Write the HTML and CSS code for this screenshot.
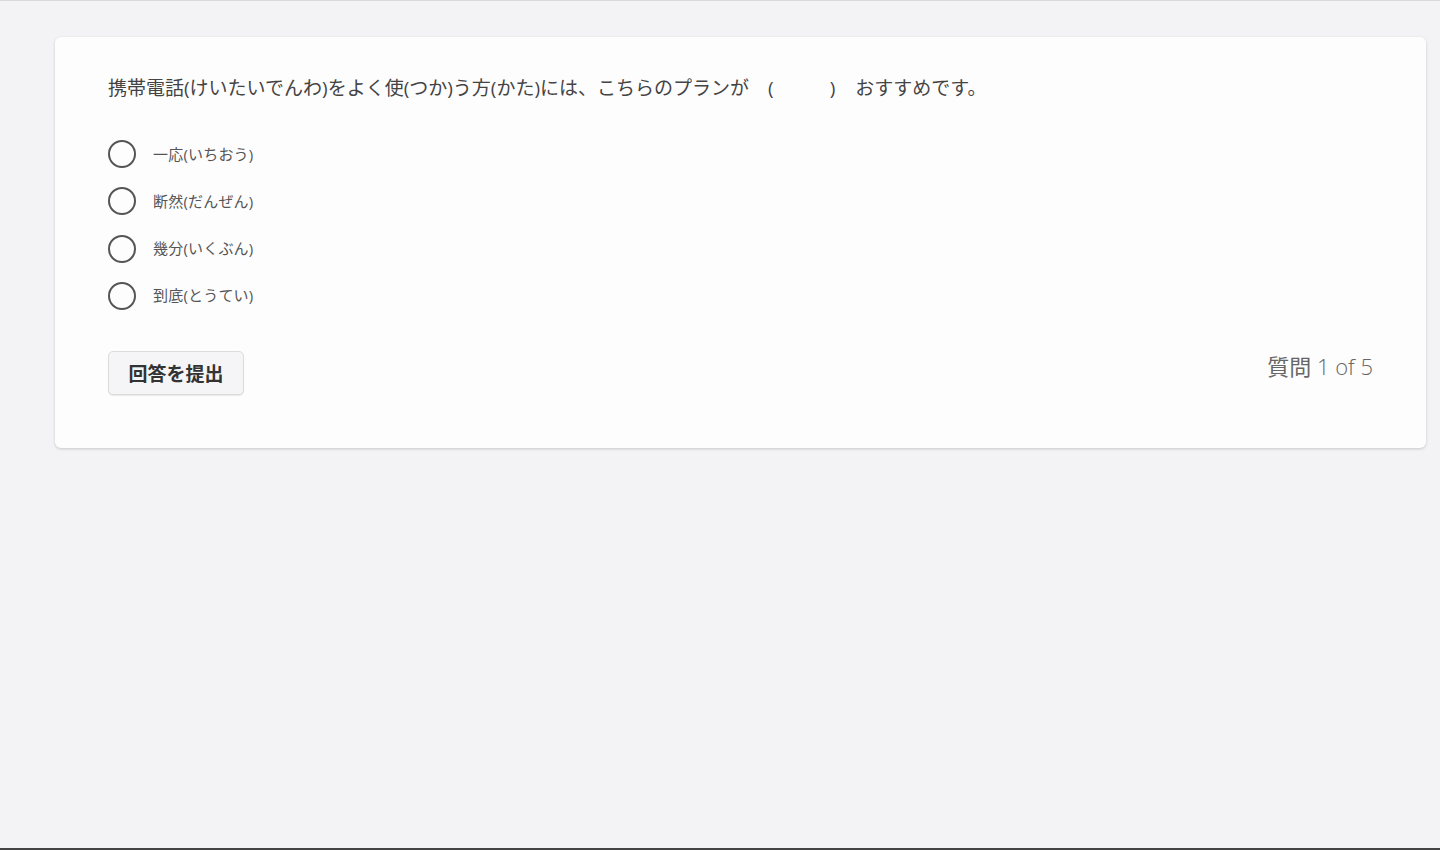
FILE: index.html
```html
<!DOCTYPE html>
<html lang="ja">
<head>
<meta charset="utf-8">
<title>Quiz</title>
<link rel="stylesheet" href="styles.css">
</head>
<body>
<div class="page">
  <div class="card">
    <p class="question">携帯電話(けいたいでんわ)をよく使(つか)う方(かた)には、こちらのプランが<span class="blank">(<span class="gap"></span>)</span>おすすめです。</p>
    <ul class="options">
      <li class="option"><span class="radio"></span><span class="label">一応(いちおう)</span></li>
      <li class="option"><span class="radio"></span><span class="label">断然(だんぜん)</span></li>
      <li class="option"><span class="radio"></span><span class="label">幾分(いくぶん)</span></li>
      <li class="option"><span class="radio"></span><span class="label">到底(とうてい)</span></li>
    </ul>
    <div class="footer">
      <button class="submit">回答を提出</button>
      <div class="progress"><span class="progress-jp">質問</span> 1 of 5</div>
    </div>
  </div>
</div>
</body>
</html>
```
FILE: styles.css
```css
html, body {
  margin: 0;
  padding: 0;
  height: 100%;
}
body {
  background: #f3f2f4;
  font-family: "Open Sans", "Noto Sans CJK JP", sans-serif;
  color: #444;
  border-top: 1px solid #d9d9d9;
  border-bottom: 2px solid #444;
  box-sizing: border-box;
}
.page {
  padding: 36px 14px 0 55px;
}
.card {
  background: #fefdfe;
  border-radius: 6px;
  box-shadow: 0 1px 3px rgba(0, 0, 0, 0.18);
  padding: 37px 53px 53px 53px;
}
.question {
  margin: 0;
  font-size: 19px;
  line-height: 28px;
  color: #444;
}
.blank {
  margin: 0 20px 0 19px;
}
.gap {
  display: inline-block;
  width: 56px;
}
.options {
  list-style: none;
  margin: 38px 0 0 0;
  padding: 0;
  display: flex;
  flex-direction: column;
  gap: 19.3px;
}
.option {
  display: flex;
  align-items: center;
  height: 28px;
}
.radio {
  width: 28px;
  height: 28px;
  box-sizing: border-box;
  border: 2px solid #555;
  border-radius: 50%;
  flex: none;
}
.label {
  margin-left: 17px;
  font-size: 15px;
  letter-spacing: 0.2px;
  color: #555;
  position: relative;
  top: -1px;
}
.footer {
  margin-top: 41px;
  display: flex;
  justify-content: space-between;
  align-items: center;
}
.submit {
  height: 44px;
  width: 136px;
  background: #f5f5f7;
  border: 1px solid #dcdcdc;
  border-radius: 5px;
  box-shadow: 0 1px 1px rgba(0, 0, 0, 0.08);
  font-family: "Noto Sans CJK JP", sans-serif;
  font-size: 19px;
  font-weight: 700;
  color: #333;
  padding: 0;
}
.progress {
  font-size: 22px;
  font-weight: 300;
  color: #666;
  margin-top: -16px;
}
.progress-jp {
  font-weight: 400;
}
```
